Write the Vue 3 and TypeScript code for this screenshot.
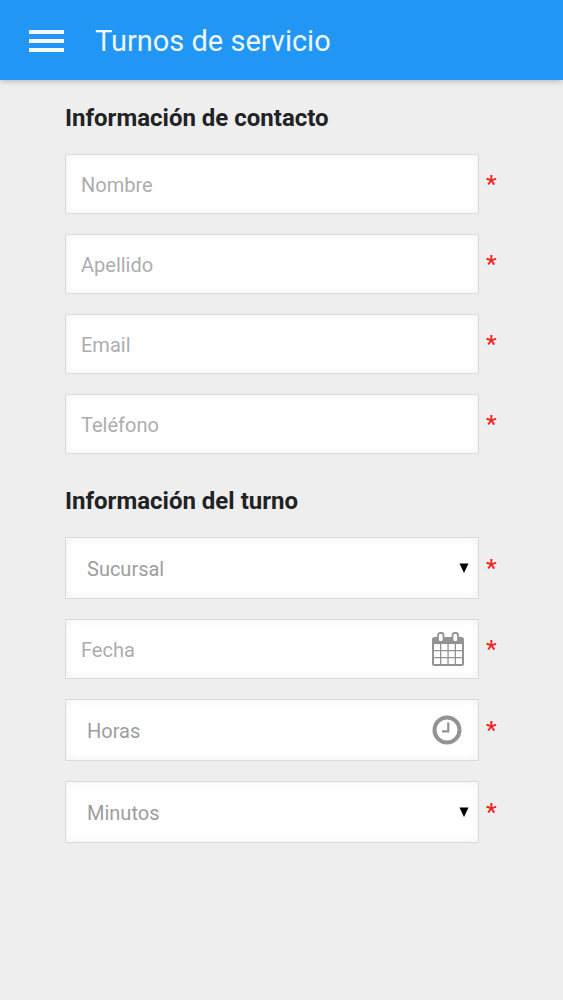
<script setup lang="ts">
import { ref } from 'vue'

interface Field {
  id: string
  label: string
  kind: 'text' | 'select'
  type?: string
  icon?: 'arrow' | 'calendar' | 'clock'
}

interface Section {
  id: string
  title: string
  fields: Field[]
}

const sections: Section[] = [
  {
    id: 'contacto',
    title: 'Información de contacto',
    fields: [
      { id: 'nombre', label: 'Nombre', kind: 'text', type: 'text' },
      { id: 'apellido', label: 'Apellido', kind: 'text', type: 'text' },
      { id: 'email', label: 'Email', kind: 'text', type: 'email' },
      { id: 'telefono', label: 'Teléfono', kind: 'text', type: 'tel' },
    ],
  },
  {
    id: 'turno',
    title: 'Información del turno',
    fields: [
      { id: 'sucursal', label: 'Sucursal', kind: 'select', icon: 'arrow' },
      { id: 'fecha', label: 'Fecha', kind: 'text', type: 'text', icon: 'calendar' },
      { id: 'horas', label: 'Horas', kind: 'select', icon: 'clock' },
      { id: 'minutos', label: 'Minutos', kind: 'select', icon: 'arrow' },
    ],
  },
]

const values = ref<Record<string, string>>({
  nombre: '',
  apellido: '',
  email: '',
  telefono: '',
  sucursal: '',
  fecha: '',
  horas: '',
  minutos: '',
})
</script>

<template>
  <div class="screen">
    <header class="bar">
      <button class="menu" type="button" aria-label="Menú">
        <span class="line"></span>
        <span class="line"></span>
        <span class="line"></span>
      </button>
      <h1 class="title">Turnos de servicio</h1>
    </header>

    <form class="form" @submit.prevent>
      <section v-for="section in sections" :key="section.id" class="section">
        <h2 class="heading">{{ section.title }}</h2>
        <div v-for="field in section.fields" :key="field.id" class="row">
          <div class="box">
            <input
              v-if="field.kind === 'text'"
              :id="field.id"
              v-model="values[field.id]"
              class="control"
              :type="field.type"
              :placeholder="field.label"
              :aria-label="field.label"
              required
            />
            <select
              v-else
              :id="field.id"
              v-model="values[field.id]"
              class="control select"
              :aria-label="field.label"
              required
            >
              <option value="">{{ field.label }}</option>
            </select>
            <svg v-if="field.icon === 'arrow'" class="icon arrow" viewBox="0 0 10 10" aria-hidden="true">
              <path d="M0.5 0.5H9.500L5 10Z" fill="#000" />
            </svg>
            <svg v-else-if="field.icon === 'calendar'" class="icon calendar" viewBox="0 0 32 34" aria-hidden="true">
              <path
                fill="#939396"
                fill-rule="evenodd"
                d="M2.500 5H29.500Q32 5 32 7.500V31.500Q32 34 29.500 34H2.500Q0 34 0 31.500V7.500Q0 5 2.500 5ZM2 12V18H8V12ZM9.300 12V18H15.400V12ZM16.700 12V18H22.700V12ZM24 12V18H30V12ZM2 19.300V25H8V19.300ZM9.300 19.300V25H15.400V19.300ZM16.700 19.300V25H22.700V19.300ZM24 19.300V25H30V19.300ZM2 26.300V32H8V26.300ZM9.300 26.300V32H15.400V26.300ZM16.700 26.300V32H22.700V26.300ZM24 26.300V32H30V26.300Z"
              />
              <rect x="6" y="1" width="5.500" height="9" rx="2" fill="#fff" stroke="#939396" stroke-width="1.800" />
              <rect x="20.500" y="1" width="5.500" height="9" rx="2" fill="#fff" stroke="#939396" stroke-width="1.800" />
            </svg>
            <svg v-else-if="field.icon === 'clock'" class="icon clock" viewBox="0 0 30 30" aria-hidden="true">
              <circle cx="15" cy="15" r="12.500" fill="none" stroke="#939396" stroke-width="4" />
              <path d="M16.300 7.500V16.300H10" fill="none" stroke="#939396" stroke-width="2.200" />
            </svg>
          </div>
          <span class="required" aria-hidden="true">*</span>
        </div>
      </section>
    </form>
  </div>
</template>

<style>
body {
  background: #eeeeef;
}
</style>

<style scoped>
.screen {
  min-height: 100vh;
  background: #eeeeef;
  font-family: Roboto, sans-serif;
}

.bar {
  display: flex;
  align-items: center;
  gap: 31px;
  height: 80px;
  padding: 0 29px;
  box-sizing: border-box;
  background: #2196f5;
  box-shadow: 0 1px 6px rgba(0, 0, 0, 0.25);
}

.menu {
  display: flex;
  flex-direction: column;
  gap: 5px;
  width: 35px;
  padding: 1px 0 0;
  border: 0;
  background: none;
}

.line {
  height: 4px;
  background: #f4fbff;
}

.title {
  margin: 0;
  padding-top: 2px;
  font-size: 29px;
  font-weight: 400;
  line-height: 40px;
  color: #eef8ff;
}

.form {
  padding: 22px 63px 40px 65px;
}

.section {
  display: flex;
  flex-direction: column;
  gap: 20px;
}

.section + .section {
  margin-top: 31px;
}

.heading {
  margin: 0;
  font-size: 24px;
  font-weight: 700;
  line-height: 32px;
  color: #222225;
}

.row {
  display: flex;
  align-items: center;
  gap: 7px;
}

.box {
  position: relative;
  flex: 1;
  display: flex;
}

.control {
  flex: 1;
  min-width: 0;
  height: 60px;
  margin: 0;
  padding: 2px 16px 0 15px;
  box-sizing: border-box;
  border: 1px solid #dadadd;
  border-radius: 1px;
  outline: 0;
  appearance: none;
  background: #fff;
  box-shadow: inset 0 0 8px rgba(60, 60, 90, 0.07);
  font-family: Roboto, sans-serif;
  font-size: 20px;
  color: #9d9da0;
}

.control::placeholder {
  color: #adadb0;
  opacity: 1;
}

.select {
  height: 62px;
  padding-left: 21px;
}

.icon {
  position: absolute;
  top: 0;
  bottom: 0;
  margin: auto 0;
  pointer-events: none;
}

.arrow {
  right: 10px;
  width: 10px;
  height: 10px;
}

.calendar {
  right: 15px;
  width: 32px;
  height: 34px;
}

.clock {
  right: 17px;
  width: 30px;
  height: 30px;
}

.required {
  width: 14px;
  font-size: 24px;
  font-weight: 500;
  line-height: 32px;
  color: #ef2525;
}
</style>
